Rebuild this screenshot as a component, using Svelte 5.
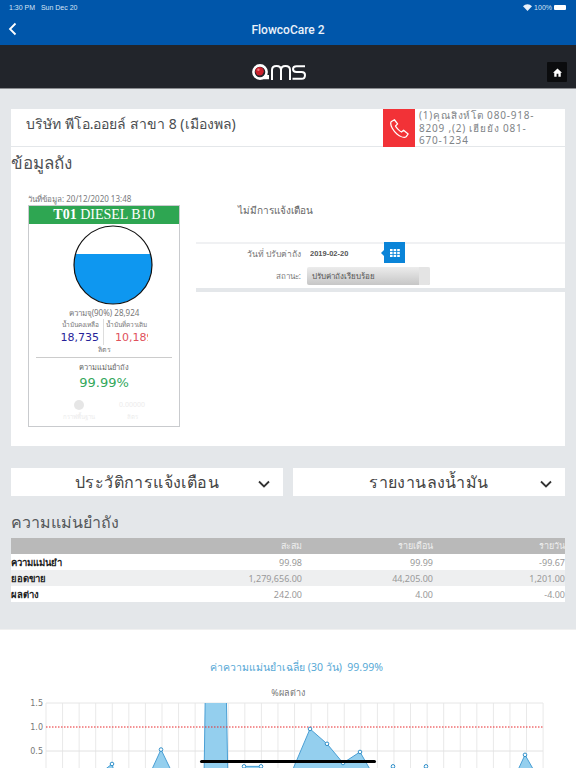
<script>
  const rows = [
    { name: 'ความแม่นยำ', total: '99.98', month: '99.99', day: '-99.67' },
    { name: 'ยอดขาย', total: '1,279,656.00', month: '44,205.00', day: '1,201.00' },
    { name: 'ผลต่าง', total: '242.00', month: '4.00', day: '-4.00' }
  ];

  // plot origin is page y=690, 48px per 1.0 on the value axis
  const gridX = Array.from({ length: 31 }, (_, i) => 46 + i * 16.57);
  const y = (v) => 85 - v * 48;
  const line = [
    [46, -0.3], [95, -0.05], [112, 0.23], [128, -1], [145, -0.2], [161, 0.53], [178, -0.2], [194, -0.3],
    [204, -0.1], [205.5, 2], [226, 2], [228, -0.2], [232, -0.2], [244, 0.18], [261, 0.18], [277, -0.2],
    [293.5, 0.15], [310, 0.96], [327, 0.65], [343, 0.25], [360, 0.48], [376, -0.1], [393, 0.18], [409, -0.1],
    [426, 0.18], [443, -0.3], [509, -0.3], [525, 0.42], [542, -0.2], [543, -0.3]
  ];
  const dots = [
    [112, 0.23], [161, 0.53], [244, 0.18], [261, 0.18], [310, 0.96], [327, 0.65],
    [343, 0.25], [360, 0.48], [393, 0.18], [426, 0.18], [525, 0.42]
  ];
  const linePoints = line.map(([x, v]) => `${x},${y(v)}`).join(' ');
</script>

<div class="page">
  <div class="topbar">
    <div class="status">
      <span>1:30 PM&nbsp;&nbsp; Sun Dec 20</span>
      <span class="status-right">
        <svg width="9" height="7" viewBox="0 0 9 7"><path d="M4.5 7 L0 2.2 A6.4 6.4 0 0 1 9 2.2 Z" fill="#e8f0fa" /></svg>
        100%
        <span class="battery"></span>
      </span>
    </div>
    <div class="nav">
      <svg class="back" width="9" height="14" viewBox="0 0 9 14"><path d="M7.5 1.5 L2 7 L7.5 12.5" fill="none" stroke="#fff" stroke-width="1.8" /></svg>
      <span>FlowcoCare 2</span>
    </div>
  </div>

  <div class="brand">
    <svg class="logo" width="54" height="16" viewBox="0 0 54 16">
      <circle cx="8" cy="8" r="6.6" fill="none" stroke="#fff" stroke-width="2.6" />
      <path d="M8 15.3 H17 V11 H13 Z" fill="#fff" />
      <circle cx="7.6" cy="7.2" r="4.2" fill="#c9202c" />
      <circle cx="6.4" cy="5.8" r="1.2" fill="#ef7a7f" />
      <path d="M20 16 V6 Q20 2 24.5 2 Q29 2 29 6 V16 M29 6 Q29 2 33.5 2 Q38 2 38 6 V16" fill="none" stroke="#fff" stroke-width="2" />
      <path d="M53 2.2 H44.5 Q41 2.2 41 5 Q41 7.9 44.5 7.9 H49.5 Q53 7.9 53 10.9 Q53 14.8 49.5 14.8 H40.5" fill="none" stroke="#fff" stroke-width="2" />
    </svg>
    <button class="home" aria-label="home">
      <svg width="9" height="9" viewBox="0 0 10 10"><path d="M5 .6 L10 5.2 H8.6 V9.6 H6 V6.5 H4 V9.6 H1.4 V5.2 H0 Z" fill="#fff" /></svg>
    </button>
  </div>

  <main>
    <section class="card">
      <div class="card-head">
        <div class="company">บริษัท พีโอ.ออยล์ สาขา 8 (เมืองพล)</div>
        <div class="phone-icon">
          <svg width="20" height="21" viewBox="0 0 24 24"><path d="M6.5 1.5 L2.5 4 C0.5 8 6 15.5 9.5 18.5 C13 21.5 18 23.5 20.5 22 L23 18.5 L17.5 14 L15 16.2 C13 15.5 8.5 11 7.8 9 L10.3 6.5 Z" fill="none" stroke="#fff" stroke-width="1.5" stroke-linejoin="round" /></svg>
        </div>
        <div class="phone-text">(1)คุณสิงห์โต 080-918-8209 ,(2) เฮียยัง 081-670-1234</div>
      </div>

      <h2 class="tank-title">ข้อมูลถัง</h2>

      <div class="tank-area">
        <div class="tank-col">
          <div class="stamp">วันที่ข้อมูล: 20/12/2020 13:48</div>
          <div class="tank-box">
            <div class="tank-name"><b>T01</b> DIESEL B10</div>
            <svg class="gauge" width="80" height="80" viewBox="0 0 80 80">
              <defs><clipPath id="gauge-clip"><circle cx="40" cy="40" r="39" /></clipPath></defs>
              <circle cx="40" cy="40" r="39" fill="#fff" />
              <rect x="0" y="29" width="80" height="51" fill="#0e97f0" clip-path="url(#gauge-clip)" />
              <circle cx="40" cy="40" r="39" fill="none" stroke="#111" stroke-width="1.2" />
            </svg>
            <div class="capacity">ความจุ(90%) 28,924</div>
            <div class="levels">
              <div class="level">
                <div class="level-label">น้ำมันคงเหลือ</div>
                <div class="level-value remain">18,735</div>
              </div>
              <div class="level">
                <div class="level-label">น้ำมันที่ควรเติม</div>
                <div class="level-value refill">10,189</div>
              </div>
            </div>
            <div class="unit">ลิตร</div>
            <div class="accuracy-label">ความแม่นยำถัง</div>
            <div class="accuracy">99.99%</div>
            <div class="faded">
              <div class="faded-cell"><span class="dot"></span><span>กราฟพื้นฐาน</span></div>
              <div class="faded-cell"><span class="faded-num">0.00000</span><span>ลิตร</span></div>
            </div>
          </div>
        </div>

        <div class="form-col">
          <div class="notice">ไม่มีการแจ้งเตือน</div>
          <div class="form">
            <div class="form-row">
              <label for="date">วันที่ ปรับค่าถัง</label>
              <input id="date" value="2019-02-20" readonly />
              <span class="cal">
                <svg width="10" height="8" viewBox="0 0 10 8" fill="#fff">
                  <rect x="0" y="0" width="2.6" height="2.2" /><rect x="3.6" y="0" width="2.6" height="2.2" /><rect x="7.2" y="0" width="2.6" height="2.2" />
                  <rect x="0" y="3" width="2.6" height="2.2" /><rect x="3.6" y="3" width="2.6" height="2.2" /><rect x="7.2" y="3" width="2.6" height="2.2" />
                  <rect x="0" y="6" width="2.6" height="2" /><rect x="3.6" y="6" width="2.6" height="2" /><rect x="7.2" y="6" width="2.6" height="2" />
                </svg>
              </span>
            </div>
            <div class="form-row">
              <span class="label">สถานะ:</span>
              <div class="select">
                <span>ปรับค่าถังเรียบร้อย</span>
                <i></i>
              </div>
            </div>
          </div>
        </div>
      </div>
    </section>

    <div class="accordions">
      <button class="accordion">
        <span>ประวัติการแจ้งเตือน</span>
        <svg width="12" height="8" viewBox="0 0 12 8"><path d="M1 1.5 L6 6.5 L11 1.5" fill="none" stroke="#333" stroke-width="1.8" /></svg>
      </button>
      <button class="accordion">
        <span>รายงานลงน้ำมัน</span>
        <svg width="12" height="8" viewBox="0 0 12 8"><path d="M1 1.5 L6 6.5 L11 1.5" fill="none" stroke="#333" stroke-width="1.8" /></svg>
      </button>
    </div>

    <h2 class="acc-title">ความแม่นยำถัง</h2>
    <table>
      <thead>
        <tr><th></th><th>สะสม</th><th>รายเดือน</th><th>รายวัน</th></tr>
      </thead>
      <tbody>
        {#each rows as row}
          <tr>
            <td class="row-name">{row.name}</td>
            <td>{row.total}</td>
            <td>{row.month}</td>
            <td>{row.day}</td>
          </tr>
        {/each}
      </tbody>
    </table>
  </main>

  <section class="chart">
    <div class="chart-title">ค่าความแม่นยำเฉลี่ย (30 วัน)&nbsp; 99.99%</div>
    <svg class="plot" width="576" height="88" viewBox="0 -10 576 88">
      <defs><clipPath id="plot-clip"><rect x="46" y="13" width="497" height="80" /></clipPath></defs>
      <text x="288" y="6" class="plot-sub">%ผลต่าง</text>
      <text x="43" y="16" class="tick">1.5</text>
      <text x="43" y="40" class="tick">1.0</text>
      <text x="43" y="64" class="tick">0.5</text>
      {#each gridX as gx}
        <line x1={gx} x2={gx} y1="13" y2="78" stroke="#e9e9e9" />
      {/each}
      <line x1="46" x2="543" y1="13" y2="13" stroke="#e6e6e6" />
      <line x1="46" x2="543" y1="61" y2="61" stroke="#e2e2e2" />
      <g clip-path="url(#plot-clip)">
        <polygon points={`${linePoints} 543,120 46,120`} fill="#94cfee" />
        <polyline points={linePoints} fill="none" stroke="#4a9fd4" stroke-width="1" />
      </g>
      <line x1="46" x2="543" y1="37" y2="37" stroke="#e8262a" stroke-width="1" stroke-dasharray="1.5 1.5" />
      {#each dots as [x, v]}
        <circle cx={x} cy={y(v)} r="1.8" fill="#fff" stroke="#2f8fc9" stroke-width="1" />
      {/each}
    </svg>
  </section>

  <div class="home-indicator"></div>
</div>

<style>
  :global(body) {
    margin: 0;
    background: #fff;
  }

  .page {
    position: relative;
    width: 576px;
    height: 768px;
    overflow: hidden;
    font-family: 'Noto Sans', 'Liberation Sans', sans-serif;
    color: #555;
  }

  .topbar {
    height: 45px;
    background: #0056aa;
    color: #fff;
  }

  .status {
    display: flex;
    justify-content: space-between;
    align-items: center;
    height: 14px;
    padding: 0 10px 0 9px;
    font: 7px 'Liberation Sans', sans-serif;
    color: #d6e4f4;
  }

  .status-right {
    display: flex;
    align-items: center;
    gap: 2px;
  }

  .battery {
    display: block;
    width: 12px;
    height: 5px;
    background: #fff;
    border-radius: 1px;
  }

  .nav {
    position: relative;
    display: flex;
    justify-content: center;
    align-items: center;
    height: 31px;
    font: 500 12px Roboto, 'Liberation Sans', sans-serif;
    color: #eaf1f9;
  }

  .back {
    position: absolute;
    left: 8px;
    top: 8px;
  }

  .brand {
    position: relative;
    display: flex;
    justify-content: center;
    align-items: center;
    height: 44px;
    background: #22252b;
    border-bottom: 1px solid #8a8c90;
    box-sizing: border-box;
  }

  .logo {
    margin-left: -19px;
    margin-top: 10px;
  }

  .home {
    position: absolute;
    right: 9px;
    top: 17px;
    width: 20px;
    height: 20px;
    padding: 0;
    border: 0;
    border-radius: 1px;
    background: #0b0c0e;
    display: flex;
    align-items: center;
    justify-content: center;
  }

  main {
    background: #e4e7ea;
    padding: 20px 11px 27px;
  }

  .card {
    background: #fff;
    height: 337px;
  }

  .card-head {
    display: flex;
    height: 38px;
    border-bottom: 1px solid #e4e7ea;
    box-sizing: border-box;
  }

  .company {
    flex: 1;
    padding: 3px 0 0 15px;
    font-size: 14px;
    line-height: 24px;
    color: #4a4d50;
  }

  .phone-icon {
    width: 32px;
    height: 38px;
    background: #f23237;
    display: flex;
    align-items: center;
    justify-content: center;
  }

  .phone-text {
    width: 150px;
    padding: 0 28px 0 4px;
    box-sizing: border-box;
    font-size: 10px;
    line-height: 12.5px;
    letter-spacing: 0.8px;
    color: #808487;
  }

  .tank-title {
    margin: 0;
    font-size: 17px;
    font-weight: 400;
    line-height: 32px;
    color: #4e5154;
  }

  .tank-area {
    display: flex;
    margin-top: 15px;
  }

  .tank-col {
    width: 185px;
    flex: none;
    padding-left: 17px;
    box-sizing: border-box;
  }

  .stamp {
    font-size: 8px;
    line-height: 10px;
    color: #77797c;
  }

  .tank-box {
    width: 152px;
    height: 222px;
    margin-top: 1px;
    border: 1px solid #c9cbce;
    box-sizing: border-box;
    text-align: center;
  }

  .tank-name {
    height: 18px;
    background: #2ea652;
    color: #fff;
    font: 14px/18px 'Liberation Serif', serif;
  }

  .gauge {
    display: block;
    margin: 1px 0 0 44px;
  }

  .capacity {
    margin-top: 3px;
    font-size: 8px;
    line-height: 10px;
    color: #777;
  }

  .levels {
    display: flex;
    margin-top: 1px;
    height: 26px;
  }

  .level {
    flex: none;
    overflow: hidden;
  }

  .level:first-child {
    width: 75px;
    padding-right: 4px;
    box-sizing: border-box;
    border-right: 1px solid #ddd;
    text-align: right;
  }

  .level:last-child {
    width: 44px;
    padding-left: 2px;
    box-sizing: border-box;
    text-align: left;
  }

  .level-label {
    font-size: 6.5px;
    line-height: 12px;
    color: #777;
    white-space: nowrap;
  }

  .level-value {
    font: 11px/14px 'DejaVu Sans', sans-serif;
    white-space: nowrap;
  }

  .remain {
    color: #262299;
  }

  .refill {
    color: #e0525c;
    padding-left: 9px;
  }

  .unit {
    font-size: 7px;
    line-height: 9px;
    color: #777;
    border-bottom: 1px solid #ccc;
    margin: 0 7px;
    padding: 0 0 3px 0;
  }

  .accuracy-label {
    margin-top: 3px;
    font-size: 7.5px;
    line-height: 13px;
    color: #666;
  }

  .accuracy {
    font: 13px/18px 'DejaVu Sans', sans-serif;
    color: #33a85c;
  }

  .faded {
    display: flex;
    justify-content: center;
    gap: 24px;
    margin-top: 8px;
    color: #ececec;
    font-size: 6px;
    line-height: 8px;
  }

  .faded-cell {
    display: flex;
    flex-direction: column;
    align-items: center;
    gap: 3px;
  }

  .faded-num {
    font-size: 7px;
    line-height: 10px;
  }

  .dot {
    width: 10px;
    height: 10px;
    border-radius: 50%;
    background: #e6e6e6;
  }

  .form-col {
    flex: 1;
  }

  .notice {
    padding: 7px 0 0 42px;
    height: 48px;
    box-sizing: border-box;
    font-size: 10px;
    line-height: 18px;
    color: #666;
  }

  .form {
    height: 44px;
    border-top: 2px solid #f0f1f3;
    border-bottom: 4px solid #e4e7ea;
  }

  .form-row {
    display: flex;
    align-items: center;
    height: 19px;
  }

  .form-row + .form-row {
    height: 20px;
    margin-top: 3px;
  }

  .form-row label,
  .label {
    width: 105px;
    text-align: right;
    font-size: 8.5px;
    color: #777;
  }

  .label {
    font-size: 8px;
  }

  input {
    width: 74px;
    height: 19px;
    margin-left: 5px;
    padding: 0 0 0 4px;
    border: 0;
    outline: 0;
    box-sizing: content-box;
    font: 600 7.5px 'Liberation Sans', sans-serif;
    color: #555;
    background: #fff;
  }

  .cal {
    position: relative;
    display: flex;
    align-items: center;
    justify-content: center;
    align-self: flex-end;
    width: 21px;
    height: 21px;
    background: #0a84d8;
  }

  .cal::before {
    content: '';
    position: absolute;
    left: -3px;
    top: 8px;
    border-style: solid;
    border-width: 3px 3px 3px 0;
    border-color: transparent #0a84d8 transparent transparent;
  }

  .select {
    position: relative;
    width: 123px;
    height: 18px;
    margin-left: 6px;
    padding-left: 5px;
    box-sizing: border-box;
    border-radius: 2px;
    background: linear-gradient(#ececec, #c6c6c6);
    font-size: 8px;
    line-height: 18px;
    color: #555;
  }

  .select i {
    position: absolute;
    right: 0;
    top: 0;
    bottom: 0;
    width: 11px;
    background: #e4e4e4;
    border-radius: 0 2px 2px 0;
  }

  .accordions {
    display: flex;
    gap: 10px;
    margin-top: 22px;
  }

  .accordion {
    position: relative;
    flex: 1;
    height: 28px;
    padding: 0;
    border: 0;
    background: #fff;
    font: 400 16px/28px 'Noto Sans', 'Liberation Sans', sans-serif;
    letter-spacing: 0.4px;
    color: #444;
    text-align: center;
  }

  .accordion svg {
    position: absolute;
    right: 13px;
    top: 12px;
  }

  .acc-title {
    margin: 13px 0 0;
    font-size: 16px;
    font-weight: 400;
    line-height: 26px;
    color: #55585b;
  }

  table {
    width: 100%;
    margin-top: 3px;
    border-collapse: collapse;
    table-layout: fixed;
    font-size: 9px;
    color: #999;
  }

  th {
    height: 16px;
    padding: 0;
    background: #b9b9b9;
    color: #eee;
    font-weight: 400;
    text-align: right;
  }

  td {
    height: 16px;
    padding: 0;
    text-align: right;
    background: #fff;
  }

  tbody tr:nth-child(2) td {
    background: #eeeff0;
  }

  th:nth-child(1) { width: 180px; }
  th:nth-child(2) { width: 111px; }
  th:nth-child(3) { width: 131px; }

  .row-name {
    text-align: left;
    font-size: 9.5px;
    font-weight: 700;
    color: #222;
  }

  .chart {
    background: #fff;
    height: 139px;
    border-top: 1px solid #f0f0f0;
    box-sizing: border-box;
  }

  .chart-title {
    padding: 28px 0 0 17px;
    text-align: center;
    font-size: 10.5px;
    line-height: 18px;
    color: #58a9d6;
  }

  .plot {
    display: block;
    margin-top: 4px;
  }

  .plot-sub {
    font: 9px 'Noto Sans', sans-serif;
    fill: #777;
    text-anchor: middle;
  }

  .tick {
    font: 8px 'DejaVu Sans', sans-serif;
    fill: #777;
    text-anchor: end;
  }

  .home-indicator {
    position: absolute;
    left: 200px;
    bottom: 5px;
    width: 176px;
    height: 3px;
    border-radius: 2px;
    background: #000;
  }
</style>
